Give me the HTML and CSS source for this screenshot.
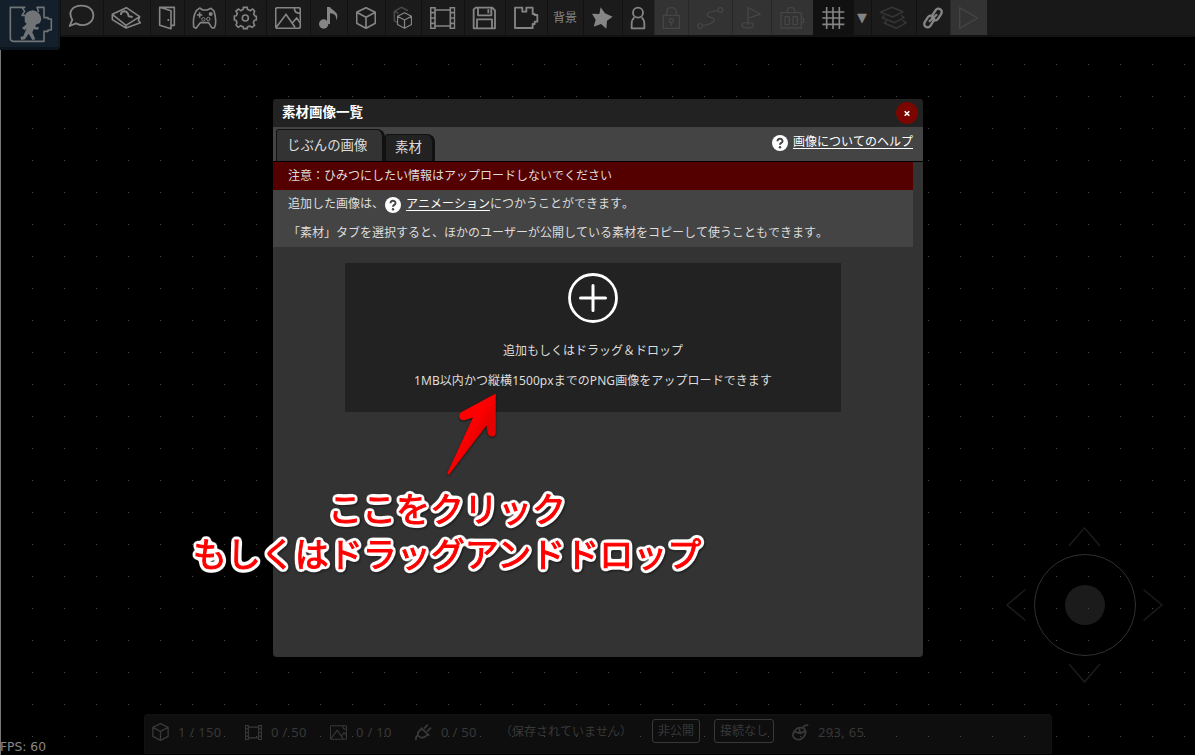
FILE: index.html
```html
<!DOCTYPE html>
<html lang="ja">
<head>
<meta charset="utf-8">
<title>素材画像一覧</title>
<link rel="stylesheet" href="styles.css">
</head>
<body>
<svg class="defs" width="0" height="0">
  <defs>
    <pattern id="dots" width="32" height="32" patternUnits="userSpaceOnUse"><rect width="1" height="1" fill="#484848"/></pattern>
    <linearGradient id="red" x1="0" y1="0" x2="1" y2="1"><stop offset=".45" stop-color="#f00"/><stop offset=".6" stop-color="#e60000"/></linearGradient>
    <filter id="outline" x="-5%" y="-20%" width="110%" height="140%" color-interpolation-filters="sRGB">
      <feGaussianBlur in="SourceAlpha" stdDeviation="2.300"/>
      <feComponentTransfer result="halo"><feFuncR type="discrete" tableValues="1"/><feFuncG type="discrete" tableValues="1"/><feFuncB type="discrete" tableValues="1"/><feFuncA type="linear" slope="18" intercept="-.5"/></feComponentTransfer>
      <feMerge><feMergeNode in="halo"/><feMergeNode in="SourceGraphic"/></feMerge>
    </filter>
    <symbol id="cube" viewBox="0 0 60 66"><path d="M30 2 58 16V49L30 64 2 49V16ZM2 16 30 31 58 16M30 31V64" fill="none" stroke="currentColor" stroke-width="5" stroke-linejoin="round"/></symbol>
    <symbol id="film" viewBox="0 0 76 66"><path d="M2 2H15V64H2ZM61 2H74V64H61ZM15 9H61M15 57H61M2 17H15M2 33H15M2 49H15M61 17H74M61 33H74M61 49H74" fill="none" stroke="currentColor" stroke-width="5"/></symbol>
    <symbol id="photo" viewBox="0 0 78 66"><path d="M8 2H70Q76 2 76 8V58Q76 64 70 64H8Q2 64 2 58V8Q2 2 8 2ZM4 61 33 22 60 61M52 48 65 33 76 48M58 2Q58 19 76 19" fill="none" stroke="currentColor" stroke-width="5"/></symbol>
    <symbol id="help" viewBox="0 0 16 16"><circle cx="8" cy="8" r="8" fill="#fff"/><path d="M5.500 6.200C5.500 2.800 10.700 3 10.500 6.200 10.400 7.900 8 7.900 8 9.800" fill="none" stroke="#444" stroke-width="2"/><circle cx="8" cy="12.200" r="1.200" fill="#444"/></symbol>
  </defs>
</svg>

<header class="toolbar">
  <div class="logo">
    <svg viewBox="0 0 180 150" width="60" height="50">
      <path d="M76 22H31V115Q31 124 40 124H132V94H144V90H154V57H144V53H132V22H111L116 36" class="line"/>
      <path d="M66 22 74 34 66 46H76" class="line"/>
      <path d="M74 58Q72 34 98 31 121 34 124 58L120 69 107 74 107 82 117 81 114 89 101 88 97 97 106 118 97 120 86 101 75 118 64 120 61 111 70 109 80 84 74 91 66 84 80 72Q72 66 74 58Z" class="solid"/>
    </svg>
  </div>
  <div class="tool w43"><svg viewBox="180 0 129 105"><path d="M209 78 217 59C202 36 218 17 244 17 268 17 280 31 280 46 280 72 250 82 228 70Z" class="line w5"/></svg></div>
  <div class="tool w47"><svg viewBox="309 0 141 105"><path d="M337 43 379 23 419 50 378 76ZM337 43V59L378 84 421 68 415 61 419 50M378 76V84" class="line"/><path d="M363 45Q362 34 374 34 384 35 386 49L398 51" class="line w6"/></svg></div>
  <div class="tool w34"><svg viewBox="450 0 102 105"><path d="M479 22H523V76H513M479 22 513 32V86L479 76ZM505 57V63" class="line"/></svg></div>
  <div class="tool w41"><svg viewBox="553 0 123 105"><path d="M590 32 600 24 609 30H622L634 25 643 33C648 50 650 72 644 84L636 83 627 68H602L589 85 582 81C580 63 582 45 590 32Z" class="line"/><path d="M600 37V53M592 45H608" class="line"/><circle cx="611" cy="58" r="5" class="line w3"/><circle cx="626" cy="57" r="5" class="line w3"/><circle cx="633" cy="42" r="6" class="solid"/></svg></div>
  <div class="tool w41"><svg viewBox="675 0 123 105"><path d="M730 28V22H742V28L751 32 758 27 764 34 761 42 765 48 769 49V60L763 61 760 68 764 76 756 82 749 78 742 81V86H730V81L722 77 715 82 708 75 711 68 708 61 703 60V48L709 47 712 40 708 33 716 27 722 32Z" class="line"/><circle cx="736" cy="54" r="9" class="line"/></svg></div>
  <div class="tool w44"><svg viewBox="18 0 132 105"><use href="#photo" x="45" y="21" width="78" height="66"/></svg></div>
  <div class="tool w37"><svg viewBox="150 0 111 105"><ellipse cx="191" cy="72" rx="14" ry="14" class="solid"/><path d="M201 72V21H210C214 31 243 37 228 61 230 45 223 41 210 40V72Z" class="solid"/></svg></div>
  <div class="tool w38"><svg viewBox="261 0 114 105"><use href="#cube" x="288" y="21" width="60" height="66"/></svg></div>
  <div class="tool w36"><svg viewBox="375 0 108 105"><path d="M412 68 403 62V34L424 22 444 32M403 34 415 40" class="line dim"/><use href="#cube" x="411" y="36" width="45" height="51"/></svg></div>
  <div class="tool w43"><svg viewBox="483 0 129 105"><use href="#film" x="510" y="21" width="76" height="66"/></svg></div>
  <div class="tool w41"><svg viewBox="612 0 123 105"><path d="M647 23H697L705 31V85H641V28ZM654 23V46H694V23M651 85V58H696V85M685 28V40" class="line w5"/></svg></div>
  <div class="tool w42"><svg viewBox="14 0 126 105"><path d="M44 23H66V35H78V23H97V42H103V45H111V65H103V72H97V84H44Z" class="line w5"/></svg></div>
  <div class="tool w36 word">背景</div>
  <div class="tool w39"><svg viewBox="249 0 117 105"><path d="M302 22 315 40 338 50 321 62 319 86 303 72 281 80 287 59 276 41 298 42Z" class="solid"/></svg></div>
  <div class="tool w32"><svg viewBox="366 0 96 105"><circle cx="414" cy="38" r="15" class="line w5"/><path d="M403 52Q395 59 395 72V85H433V72Q433 59 425 52" class="line w5"/></svg></div>
  <div class="tool off w34"><svg viewBox="462 0 102 105"><path d="M490 46H538V85H490ZM500 46V36Q500 23 514 23 529 23 529 36V46M514 65V77" class="line"/><circle cx="514" cy="62" r="6" class="line"/></svg></div>
  <div class="tool off w44"><svg viewBox="566 0 132 105"><circle cx="602" cy="78" r="7" class="line"/><circle cx="663" cy="30" r="7" class="line"/><path d="M656 32C620 35 617 46 631 51 654 58 651 68 610 77" class="line"/></svg></div>
  <div class="tool off w39"><svg viewBox="697 0 117 105"><path d="M745 76V23L782 42 745 55" class="line"/><ellipse cx="744" cy="76" rx="17" ry="8" class="line"/></svg></div>
  <div class="tool off w42"><svg viewBox="92 0 126 105"><path d="M122 38H183V84H122ZM142 37Q137 23 152 23 167 23 162 37M184 55H190V68H184M134 50H147V74H134ZM158 50H171V74H158Z" class="line"/></svg></div>
  <div class="tool dark w40"><svg viewBox="218 0 120 105"><path d="M259 21V87M278 21V87M297 21V87M246 36H312M246 54H312M246 73H312" class="line"/></svg></div>
  <div class="tool w18 caret">▼</div>
  <div class="tool w45"><svg viewBox="393 0 135 105"><path d="M421 37 456 22 489 35 458 51ZM433 47 427 53 464 68 492 53 484 46M440 62 433 69 469 85 499 68 488 61" class="line faint"/></svg></div>
  <div class="tool w34"><svg viewBox="528 0 102 105"><g transform="rotate(33 579 54)" class="line w7"><rect x="570" y="20" width="20" height="38" rx="10" transform="translate(3 0)"/><rect x="568" y="50" width="20" height="38" rx="10" transform="translate(-3 0)"/><path d="M583 38 575 70"/></g></svg></div>
  <div class="tool off w37"><svg viewBox="629 0 111 105"><path d="M658 23V85L712 54Z" class="line"/></svg></div>
</header>

<main class="stage">
  <section class="dialog">
    <div class="title"><span class="heading">素材画像一覧</span><span class="close"><svg viewBox="0 0 22 22" width="22" height="22"><path d="M8.700 9.200 13.300 13.800M13.300 9.200 8.700 13.800" stroke="#fff" stroke-width="1.600"/></svg></span></div>
    <nav class="tabs">
      <div class="tab active">じぶんの画像</div>
      <div class="tab">素材</div>
      <div class="help"><svg width="16" height="16"><use href="#help"/></svg><a>画像についてのヘルプ</a></div>
    </nav>
    <div class="content">
      <p class="warning">注意：ひみつにしたい情報はアップロードしないでください</p>
      <div class="info">
        <p>追加した画像は、<svg width="16" height="16"><use href="#help"/></svg><a>アニメーション</a>につかうことができます。</p>
        <p>「素材」タブを選択すると、ほかのユーザーが公開している素材をコピーして使うこともできます。</p>
      </div>
      <div class="drop">
        <svg width="50" height="50" viewBox="0 0 50 50"><circle cx="25" cy="25" r="23.500" fill="none" stroke="#fff" stroke-width="2.800"/><path d="M25 12.500V37.500M12.500 25H37.500" stroke="#fff" stroke-width="3" stroke-linecap="round"/></svg>
        <p>追加もしくはドラッグ＆ドロップ</p>
        <p class="limit">1MB以内かつ縦横1500pxまでのPNG画像をアップロードできます</p>
      </div>
    </div>
  </section>
</main>

<footer class="status">
  <div class="stat s1"><svg width="17" height="18"><use href="#cube"/></svg>1 / 150</div>
  <div class="stat s2"><svg width="17" height="15"><use href="#film"/></svg>0 / 50</div>
  <div class="stat s3"><svg width="17" height="15"><use href="#photo"/></svg>0 / 10</div>
  <div class="stat s4"><svg width="17" height="18" viewBox="0 0 51 54"><path d="M3 52V43Q5 38 10 36M17 14 43 38M20 18Q4 28 10 39 21 51 39 35M27 17 38 5M36 26 48 14" class="line w5"/></svg>0 / 50</div>
  <div class="saved">（保存されていません）</div>
  <div class="badge b1">非公開</div>
  <div class="badge b2">接続なし</div>
  <div class="stat s5"><svg width="17" height="18" viewBox="0 0 51 54"><path d="M7 25C16 9 38 11 41 25 41 43 23 54 11 48 1 43 1 34 7 25ZM7 26 25 31 38 25M21 16 25 31M32 15Q38 4 49 7" class="line w5"/></svg>293, 65</div>
</footer>

<svg class="grid" width="1195" height="755"><rect width="1195" height="755" fill="url(#dots)"/><rect y="50" width="1" height="705" fill="#777"/></svg>
<svg class="pad" width="156" height="156" viewBox="0 0 156 156"><circle cx="79" cy="78" r="50.500" stroke="#303030"/><circle cx="79" cy="78" r="20" fill="#1b1b1b"/><path d="M63 19 78.500.800 94 19M63 137 78.500 155 94 137M19.500 62.500 1 78 19.500 93.500M137.500 62.500 156 78 137.500 93.500" stroke="#1b1b1b" stroke-width="1.500"/></svg>
<div class="fps">FPS: 60</div>
<div class="note"><div>ここをクリック</div><div>もしくはドラッグアンドドロップ</div></div>
<svg class="arrow" width="60" height="90" viewBox="440 390 60 90"><path d="M495.800 393.500V432Q496 436.500 492 436.500 488 436.500 487.500 432L486.500 425.500 449.500 474Q447.500 476 447.300 473L473 417.500 465 420Q461.500 421 459.500 418 458 414 461.500 412Z" fill="url(#red)"/></svg>
</body>
</html>
```
FILE: styles.css
```css
* { box-sizing: border-box; }
body {
  margin: 0;
  width: 1195px;
  height: 755px;
  overflow: hidden;
  position: relative;
  display: flex;
  flex-direction: column;
  background: #000;
  color: #ddd;
  font: 12px/18px "Noto Sans", "Noto Sans CJK JP", sans-serif;
  font-kerning: none;
}
p { margin: 0; }
.defs { position: absolute; }
.line { fill: none; stroke: currentColor; stroke-width: 4.8; stroke-linejoin: round; }
.line.w3 { stroke-width: 3; }
.line.w5 { stroke-width: 5.5; }
.line.w6 { stroke-width: 6; }
.line.w7 { stroke-width: 7; }
.off .line { stroke-width: 4; }
.solid { fill: currentColor; }
.dim { color: #484848; }
.faint { color: #353535; }

.toolbar {
  display: flex;
  flex: none;
  height: 37px;
  background: #181818;
  border-bottom: 2px solid #121212;
  color: #858585;
  position: relative;
  z-index: 3;
}
.logo {
  flex: none;
  width: 60px;
  height: 50px;
  background: #13202c;
  border-right: 2px solid #111923;
  border-bottom: 3px solid #0d151f;
  color: #717477;
  border-radius: 0 0 3px 0;
}
.logo svg { display: block; }
.tool {
  flex: none;
  height: 35px;
  background: #1b1b1b;
  box-shadow: inset 1px 0 #111;
  display: flex;
  align-items: center;
  justify-content: center;
}
.tool svg { width: 100%; height: 35px; }
.tool.off { background: #333; color: #454545; box-shadow: inset 1px 0 #282828; }
.tool.dark { background: #111; }
.word { color: #858585; font-size: 12px; }
.caret { font: 13px/35px "DejaVu Sans", sans-serif; }
.w18 { width: 18px; }
.w32 { width: 32px; }
.w34 { width: 34px; }
.w36 { width: 36px; }
.w37 { width: 37px; }
.w38 { width: 38px; }
.w39 { width: 39px; }
.w40 { width: 40px; }
.w41 { width: 41px; }
.w42 { width: 42px; }
.w43 { width: 43px; }
.w44 { width: 44px; }
.w45 { width: 45px; }
.w47 { width: 47px; }

.stage { flex: 1; padding: 62px 0 0 273px; }
.dialog {
  width: 650px;
  height: 558px;
  background: #333;
  border-radius: 4px;
  overflow: hidden;
  position: relative;
  z-index: 2;
}
.title {
  height: 28px;
  background: #222;
  padding: 0 5px 0 9px;
  display: flex;
  align-items: center;
  justify-content: space-between;
  color: #fff;
  font-size: 13.5px;
  font-weight: 700;
}
.heading { padding-bottom: 2px; }
.close { width: 22px; height: 22px; border-radius: 50%; background: #7b0600; }
.close svg { display: block; }
.tabs {
  height: 35px;
  background: #444;
  border-bottom: 1px solid #000;
  padding-left: 3px;
  display: flex;
  align-items: flex-end;
}
.tab {
  width: 50px;
  height: 27px;
  background: #222;
  border: 1px solid #111;
  border-width: 1px 3px 0 1px;
  border-radius: 3px 8px 0 0;
  font-size: 13.4px;
  line-height: 24px;
  padding-left: 9px;
  white-space: nowrap;
}
.tab.active { width: 109px; height: 32px; background: #333; padding-left: 10px; line-height: 31px; }
.help { margin-left: auto; padding: 0 10px 9px 0; display: flex; align-items: center; gap: 5px; line-height: 20px; }
.help svg { margin-top: 1px; }
a { color: #fff; text-decoration: underline; text-underline-offset: 2px; }
.content { width: 640px; }
.warning { height: 28px; background: #500; padding: 5px 15px; }
.info { background: #444; height: 57px; padding: 5px 15px; display: flex; flex-direction: column; gap: 11px; }
.info svg { margin: 0 5px 0 1px; vertical-align: -5px; }
.info p { height: 18px; white-space: nowrap; }
.drop {
  width: 496px;
  height: 149px;
  margin: 16px 0 0 72px;
  background: #222;
  padding-top: 10px;
  display: flex;
  flex-direction: column;
  align-items: center;
}
.drop p { margin-top: 19px; height: 18px; }
.drop .limit { margin-top: 12px; letter-spacing: .06px; }

.status {
  width: 908px;
  height: 40px;
  flex: none;
  margin: 0 0 1px 144px;
  background: #0e0e0e;
  border: 1px solid #111;
  border-top-width: 2px;
  border-radius: 4px 4px 0 0;
  display: flex;
  align-items: flex-start;
  padding: 3px 0 0 7px;
  color: #383838;
  font-size: 13px;
  white-space: nowrap;
}
.stat { display: flex; align-items: center; gap: 9px; height: 26px; letter-spacing: .3px; }
.s1 { width: 93px; }
.s2 { width: 85px; }
.s3 { width: 85px; }
.s4 { width: 85px; }
.saved { width: 152px; line-height: 26px; font-size: 12px; }
.badge { height: 24px; border: 1px solid #383838; border-radius: 3px; text-align: center; font-size: 12px; line-height: 21px; }
.b1 { width: 48px; margin-right: 14px; }
.b2 { width: 60px; margin-right: 18px; }

.grid { position: absolute; left: 0; top: 0; z-index: 1; }
.pad { position: absolute; left: 1006px; top: 527px; fill: none; overflow: visible; }
.fps { position: absolute; left: 0; bottom: -1px; color: #888; font: 12.3px/18px "DejaVu Sans", sans-serif; z-index: 2; }
.note {
  position: absolute;
  left: 191px;
  top: 485px;
  width: 512px;
  z-index: 4;
  text-align: center;
  white-space: nowrap;
  font: 400 34px/45px "Noto Sans CJK JP", sans-serif;
  color: #f00;
  -webkit-text-stroke: 1px #f00;
  filter: url(#outline) drop-shadow(1px 1px 1px #0008);
}
.arrow { position: absolute; left: 440px; top: 390px; z-index: 4; filter: drop-shadow(0 1px 1px #0009); }
```
